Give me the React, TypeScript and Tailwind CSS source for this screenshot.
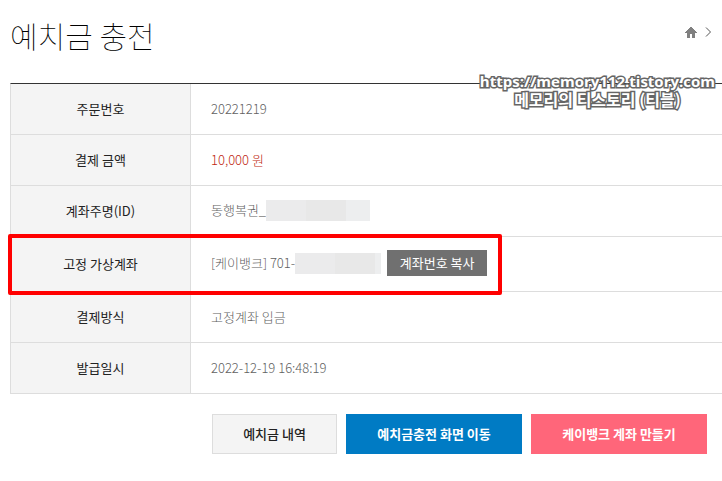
import type { ReactNode } from 'react';

interface RowProps {
  label: string;
  children: ReactNode;
  highlight?: boolean;
}

export default function App() {
  return (
    <main className="relative bg-white pb-6 text-[13px] leading-5 font-light text-[#5f5f5f] [font-family:'Noto_Sans_CJK_KR',sans-serif]">
      <header className="flex items-start justify-between pt-3 pr-2.5 pb-6 pl-2.5">
        <h1 className="text-[30px] leading-[47px] font-thin text-black">예치금 충전</h1>
        <nav aria-label="breadcrumb" className="flex items-center gap-2 pt-3.5">
          <a href="#" aria-label="홈">
            <HomeIcon />
          </a>
          <ChevronIcon />
        </nav>
      </header>

      <div className="pl-2.5">
        <table className="w-full border-separate border-spacing-0 border-t border-l border-t-[#333] border-l-[#ddd]">
          <tbody>
            <Row label="주문번호">20221219</Row>
            <Row label="결제 금액">
              <span className="text-[#c01f10]">10,000 원</span>
            </Row>
            <Row label="계좌주명(ID)">
              <div className="flex items-center pb-0.5">
                동행복권_
                <Mosaic width="w-[104px]" />
              </div>
            </Row>
            <Row label="고정 가상계좌" highlight>
              <div className="flex items-center pb-0.5">
                [케이뱅크] 701-
                <Mosaic width="w-[86px]" />
                <button type="button" className="ml-1.5 h-[26px] w-[100px] bg-[#707070] font-normal text-white">
                  계좌번호 복사
                </button>
              </div>
            </Row>
            <Row label="결제방식">고정계좌 입금</Row>
            <Row label="발급일시">2022-12-19 16:48:19</Row>
          </tbody>
        </table>
      </div>

      {/* 하단 버튼 */}
      <div className="flex justify-end gap-[9px] pt-5 pr-[15px]">
        <button type="button" className="h-10 w-[125px] border border-[#ddd] bg-[#f4f4f4] font-medium text-[#222]">
          예치금 내역
        </button>
        <button type="button" className="h-10 w-44 bg-[#007bc4] font-bold text-white">
          예치금충전 화면 이동
        </button>
        <button type="button" className="h-10 w-44 bg-[#ff667a] font-bold text-white">
          케이뱅크 계좌 만들기
        </button>
      </div>

      <Watermark />
    </main>
  );
}

function Row({ label, children, highlight }: RowProps) {
  return (
    <tr className={highlight ? 'relative h-[55px]' : 'h-[51px]'}>
      <th scope="row" className="w-[180px] border-r border-b border-[#ddd] bg-[#f4f4f4] font-normal text-[#222]">
        {label}
        {/* 강조 테두리 */}
        {highlight && (
          <span className="pointer-events-none absolute -top-[3px] -left-[3px] h-[61px] w-[494px] rounded-xs border-4 border-[#ff0000]" />
        )}
      </th>
      <td className="border-b border-[#ddd] pl-5">{children}</td>
    </tr>
  );
}

function Mosaic({ width }: { width: string }) {
  return (
    <span className={`flex h-[21px] ${width}`}>
      <span className="w-10 bg-[#ebebec]" />
      <span className="w-10 bg-[#e8e8e8]" />
      <span className="flex-1 bg-[#edeeef]" />
    </span>
  );
}

function Watermark() {
  return (
    <div className="pointer-events-none absolute top-[72px] right-[7px] text-center font-bold text-white [-webkit-text-stroke:3px_#666] [paint-order:stroke_fill]">
      <p className="text-[15px] leading-[18px] [font-family:'Open_Sans',sans-serif]">https://memory112.tistory.com</p>
      <p className="text-[16px] leading-[18px]">메모리의 티스토리 (티블)</p>
    </div>
  );
}

function HomeIcon() {
  return (
    <svg width="12" height="12" viewBox="0 0 12 12" fill="#808080" shapeRendering="crispEdges">
      <path d="M5 1h2v1h1v1h1v1h1v1h1v1h1v1h-2v5H7V8H5v4H2V7H0V6h1V5h1V4h1V3h1V2h1z" />
    </svg>
  );
}

function ChevronIcon() {
  return (
    <svg width="7" height="10" viewBox="0 0 7 10" fill="none" stroke="#555">
      <path d="M1 .5 5.5 5 1 9.5" />
    </svg>
  );
}
